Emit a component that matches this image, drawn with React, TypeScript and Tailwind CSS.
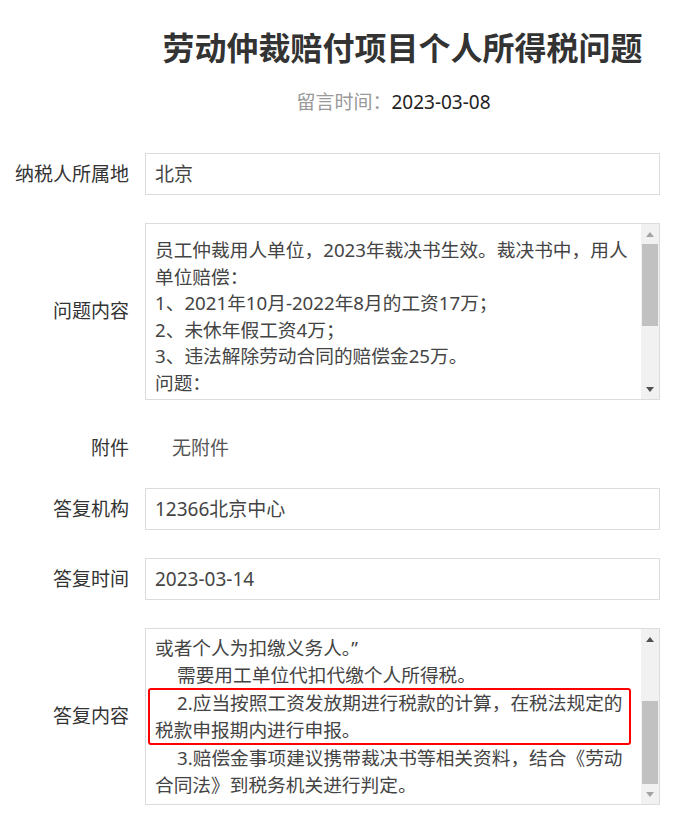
import React from "react";

const Arrow = ({ dir, dark }: { dir: "up" | "down"; dark: boolean }) => (
    <div className="h-[20px] flex items-center justify-center">
        {dir === "up" ? (
            <div
                className={
                    "w-0 h-0 border-x-[4px] border-x-transparent border-b-[5px] " +
                    (dark ? "border-b-[#505050]" : "border-b-[#a3a3a3]")
                }
            />
        ) : (
            <div
                className={
                    "w-0 h-0 border-x-[4px] border-x-transparent border-t-[5px] " +
                    (dark ? "border-t-[#505050]" : "border-t-[#a3a3a3]")
                }
            />
        )}
    </div>
);

// fake scrollbar, like the old textarea one
const ScrollBar = ({ atTop }: { atTop: boolean }) => (
    <div className="w-[18px] shrink-0 bg-[#f1f1f1] flex flex-col">
        <Arrow dir="up" dark={!atTop} />
        {atTop ? (
            <>
                <div className="mx-[1px] h-[82px] bg-[#c1c1c1]" />
                <div className="flex-1" />
            </>
        ) : (
            <>
                <div className="flex-1" />
                <div className="mx-[1px] h-[83px] bg-[#c1c1c1]" />
            </>
        )}
        <Arrow dir="down" dark={atTop} />
    </div>
);

const Row = ({ label, children }: { label: string; children: React.ReactNode }) => (
    <div className="flex items-center">
        <div className="w-[129px] shrink-0 text-right text-[#333]">{label}</div>
        <div className="ml-[16px] flex-1">{children}</div>
    </div>
);

const Field = ({ value }: { value: string }) => (
    <div className="h-[42px] border border-[#dcdcdc] px-[9px] flex items-center text-[#444]">{value}</div>
);

const App = () => {
    return (
        <div className="w-[700px] min-h-[829px] bg-white font-['Noto_Sans','Noto_Sans_CJK_SC',sans-serif] text-[19px]">
            <div className="pl-[145px] pr-[40px] pt-[26px]">
                <h1 className="text-center text-[32px] font-bold leading-[44px] text-[#333]">
                    劳动仲裁赔付项目个人所得税问题
                </h1>
                <div className="mt-[18px] flex justify-center pr-[18px] leading-[28px]">
                    <span className="text-[#999]">留言时间：</span>
                    <span className="text-[#222]">2023-03-08</span>
                </div>
            </div>

            <div className="mt-[37px] pr-[40px] flex flex-col">
                <Row label="纳税人所属地">
                    <Field value="北京" />
                </Row>

                <div className="mt-[28px]">
                    <Row label="问题内容">
                        <div className="h-[177px] border border-[#dcdcdc] flex">
                            <div className="flex-1 overflow-hidden pl-[9px] pt-[13px] text-[18.7px] leading-[26.5px] text-[#444] whitespace-nowrap">
                                <div>员工仲裁用人单位，2023年裁决书生效。裁决书中，用人</div>
                                <div>单位赔偿：</div>
                                <div>1、2021年10月-2022年8月的工资17万；</div>
                                <div>2、未休年假工资4万；</div>
                                <div>3、违法解除劳动合同的赔偿金25万。</div>
                                <div>问题：</div>
                            </div>
                            <ScrollBar atTop={true} />
                        </div>
                    </Row>
                </div>

                <div className="mt-[28px] h-[40px] flex items-center">
                    <div className="w-[129px] shrink-0 text-right text-[#333]">附件</div>
                    <div className="ml-[43px] text-[#555]">无附件</div>
                </div>

                <div className="mt-[20px]">
                    <Row label="答复机构">
                        <Field value="12366北京中心" />
                    </Row>
                </div>

                <div className="mt-[28px]">
                    <Row label="答复时间">
                        <Field value="2023-03-14" />
                    </Row>
                </div>

                <div className="mt-[28px]">
                    <Row label="答复内容">
                        <div className="h-[177px] border border-[#dcdcdc] flex">
                            <div className="flex-1 overflow-hidden pl-[9px] pt-[6px] text-[18.7px] leading-[26.5px] text-[#444] whitespace-nowrap">
                                <div>或者个人为扣缴义务人。”</div>
                                <div className="pl-[22px]">需要用工单位代扣代缴个人所得税。</div>
                                <div className="-ml-[7px] w-[483px] pl-[5px] border-2 border-[#ff0000] rounded-[3px]">
                                    <div className="pl-[22px]">2.应当按照工资发放期进行税款的计算，在税法规定的</div>
                                    <div>税款申报期内进行申报。</div>
                                </div>
                                <div className="pl-[22px]">3.赔偿金事项建议携带裁决书等相关资料，结合《劳动</div>
                                <div>合同法》到税务机关进行判定。</div>
                            </div>
                            <ScrollBar atTop={false} />
                        </div>
                    </Row>
                </div>
            </div>
        </div>
    );
};

export default App;
